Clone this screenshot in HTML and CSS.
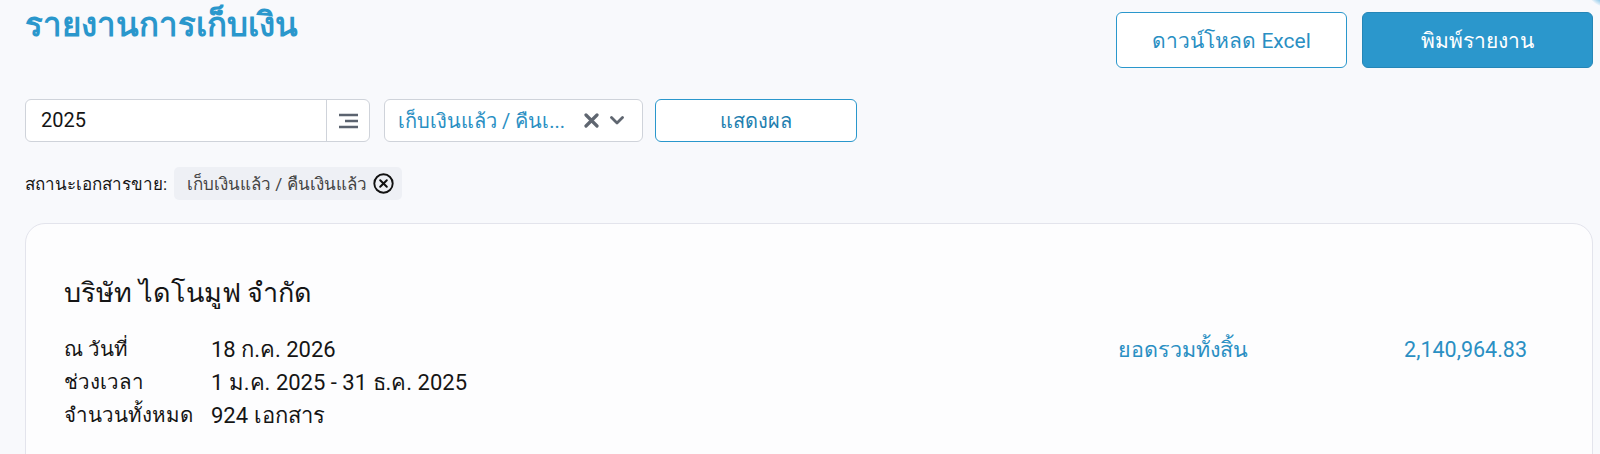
FILE: index.html
```html
<!DOCTYPE html>
<html lang="th">
<head>
    <meta charset="UTF-8">
    <meta name="viewport" content="width=device-width, initial-scale=1.0">
    <title>รายงานการเก็บเงิน</title>
    <link rel="stylesheet" href="styles.css">
</head>
<body>
    <div class="corner-glow"></div>

    <div class="page">
        <div class="page-header">
            <h1>รายงานการเก็บเงิน</h1>
            <div class="header-actions">
                <button class="btn btn-outline">ดาวน์โหลด Excel</button>
                <button class="btn btn-primary">พิมพ์รายงาน</button>
            </div>
        </div>

        <div class="filters">
            <div class="year-input">
                <span class="year-value">2025</span>
                <span class="year-addon">
                    <svg width="20" height="16" viewBox="0 0 20 16">
                        <path d="M1 2h19M7 8h13M1 14h19" stroke="#5b636f" stroke-width="2.6" fill="none"/>
                    </svg>
                </span>
            </div>
            <div class="status-select">
                <span class="status-text">เก็บเงินแล้ว / คืนเ...</span>
                <span class="select-icons">
                    <svg width="15" height="15" viewBox="0 0 15 15">
                        <path d="M2 2l11 11M13 2L2 13" stroke="#5f6670" stroke-width="3.2" stroke-linecap="round"/>
                    </svg>
                    <svg width="14" height="9" viewBox="0 0 14 9">
                        <path d="M1.5 1.5l5.5 5.5 5.5-5.5" stroke="#5f6670" stroke-width="2.8" fill="none" stroke-linecap="round" stroke-linejoin="round"/>
                    </svg>
                </span>
            </div>
            <button class="btn btn-outline btn-show">แสดงผล</button>
        </div>

        <div class="active-filters">
            <span class="active-label">สถานะเอกสารขาย:</span>
            <span class="chip">
                เก็บเงินแล้ว / คืนเงินแล้ว
                <svg class="chip-close" width="21" height="21" viewBox="0 0 21 21">
                    <circle cx="10.5" cy="10.5" r="9.2" stroke="#111" stroke-width="1.9" fill="none"/>
                    <path d="M7.2 7.2l6.6 6.6M13.8 7.2l-6.6 6.6" stroke="#111" stroke-width="2" stroke-linecap="round"/>
                </svg>
            </span>
        </div>

        <div class="report-card">
            <div class="company-name">บริษัท ไดโนมูฟ จำกัด</div>
            <div class="report-body">
                <div class="report-info">
                    <span class="info-label">ณ วันที่</span>
                    <span>18 ก.ค. 2026</span>
                    <span class="info-label">ช่วงเวลา</span>
                    <span>1 ม.ค. 2025 - 31 ธ.ค. 2025</span>
                    <span class="info-label">จำนวนทั้งหมด</span>
                    <span>924 เอกสาร</span>
                </div>
                <div class="report-total">
                    <span>ยอดรวมทั้งสิ้น</span>
                    <span>2,140,964.83</span>
                </div>
            </div>
        </div>
    </div>
</body>
</html>
```

FILE: styles.css
```css
body {
    margin: 0;
    background-color: #f8f9fc;
    font-family: Roboto, "Noto Sans", sans-serif;
    color: #151515;
    overflow: hidden;
}
/* decorative blob peeking in from the top right corner */
.corner-glow {
    position: absolute;
    top: -44px;
    right: -36px;
    width: 52px;
    height: 52px;
    border-radius: 50%;
    background: radial-gradient(circle, #48a9dc 45%, rgba(120, 196, 235, 0) 72%);
}
.page {
    padding: 11px 7px 0 25px;
}
.page-header {
    display: flex;
    justify-content: space-between;
    align-items: flex-start;
}
h1 {
    margin: 0;
    color: #2a97cc;
    font-size: 33px;
    font-weight: 600;
    line-height: 28px;
}
.header-actions {
    display: flex;
    gap: 15px;
    margin-top: 1px;
}
.btn {
    font-family: inherit;
    font-size: 21px;
    border-radius: 6px;
    cursor: pointer;
}
.header-actions .btn {
    width: 231px;
    height: 56px;
}
.btn-outline {
    background-color: #fff;
    color: #2a8fc3;
    border: 1.5px solid #2a97cc;
}
.btn-primary {
    background-color: #2b97cc;
    color: #fff;
    border: 1px solid #2586b7;
}
.filters {
    display: flex;
    align-items: center;
    margin-top: 31px;
    height: 43px;
}
.year-input {
    display: flex;
    width: 345px;
    height: 43px;
    box-sizing: border-box;
    background-color: #fff;
    border: 1px solid #cfd3da;
    border-radius: 6px;
}
.year-value {
    flex: 1;
    padding-left: 15px;
    font-size: 20px;
    line-height: 41px;
}
.year-addon {
    display: flex;
    align-items: center;
    justify-content: center;
    width: 42px;
    border-left: 1px solid #cfd3da;
}
.status-select {
    display: flex;
    align-items: center;
    justify-content: space-between;
    width: 259px;
    height: 43px;
    box-sizing: border-box;
    margin-left: 14px;
    padding: 0 18px 0 13px;
    background-color: #fff;
    border: 1px solid #cfd3da;
    border-radius: 6px;
}
.status-text {
    color: #2a8fc3;
    font-size: 20px;
}
.select-icons {
    display: flex;
    align-items: center;
    gap: 11px;
}
.btn-show {
    width: 202px;
    height: 43px;
    margin-left: 12px;
    font-size: 20px;
    color: #1f7fb0;
}
.active-filters {
    display: flex;
    align-items: center;
    margin-top: 25px;
    font-size: 17px;
}
.active-label {
    margin-right: 7px;
}
.chip {
    display: flex;
    align-items: center;
    gap: 6px;
    height: 33px;
    padding: 0 8px 0 13px;
    background-color: #eef0f5;
    border-radius: 5px;
    color: #444;
}
.report-card {
    margin-top: 23px;
    height: 260px;
    padding: 52px 65px 0 38px;
    background-color: #fdfdfe;
    border: 1px solid #e3e4ec;
    border-radius: 20px;
}
.company-name {
    font-size: 27px;
    line-height: 34px;
    font-weight: 500;
}
.report-body {
    display: flex;
    justify-content: space-between;
    margin-top: 23px;
    font-size: 22px;
    line-height: 33px;
}
.report-info {
    display: grid;
    grid-template-columns: 147px auto;
    grid-auto-rows: 33px;
}
.info-label {
    font-size: 20.5px;
}
.report-total {
    display: flex;
    justify-content: space-between;
    align-items: flex-start;
    width: 409px;
    font-size: 21.5px;
    color: #2a8fc3;
}
```
